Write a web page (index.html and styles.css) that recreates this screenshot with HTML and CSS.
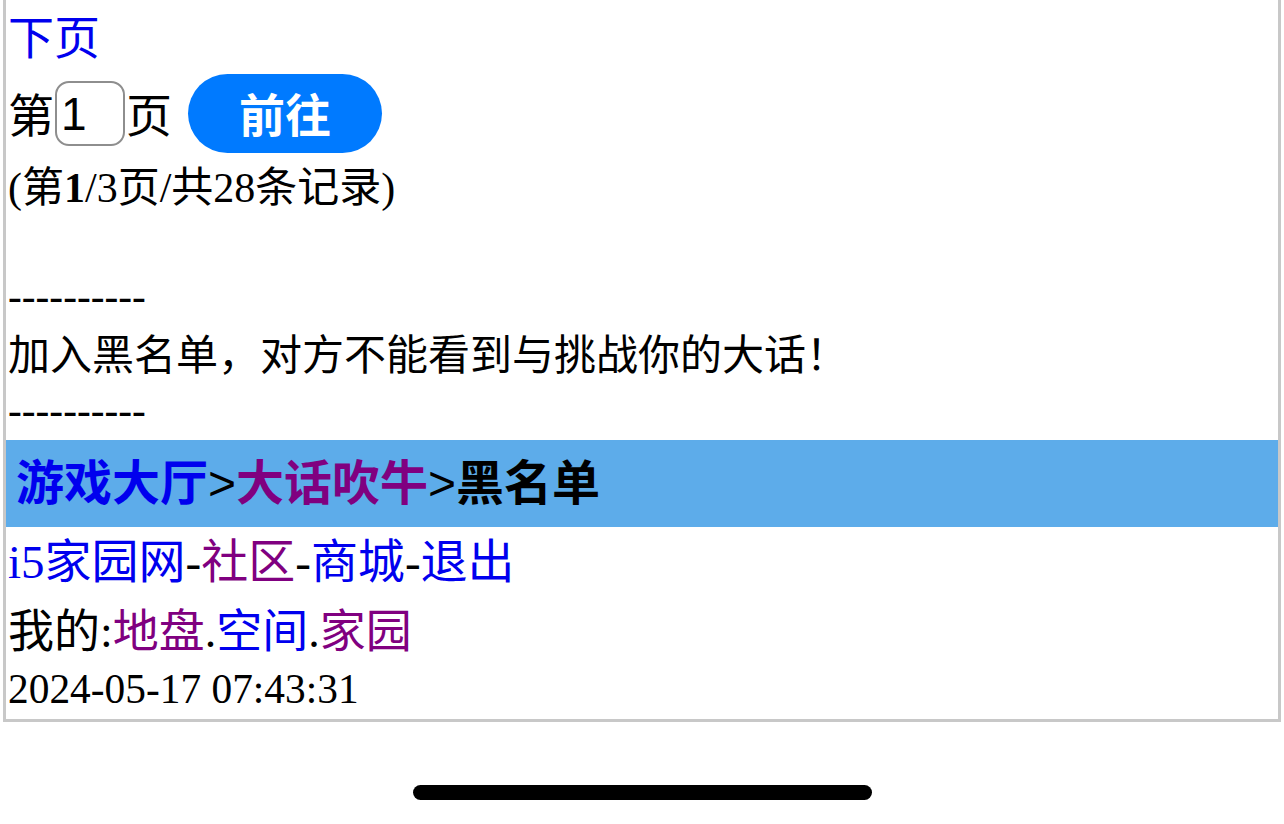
FILE: index.html
```html
<!DOCTYPE html>
<html lang="zh-CN">
<head>
<meta charset="utf-8">
<title>黑名单</title>
<link rel="stylesheet" href="styles.css">
</head>
<body>
<div class="page">
  <div class="next"><a href="#" class="lnk">下页</a></div>
  <form class="goto">
    <span class="goto-txt">第</span>
    <input class="goto-input" type="text" value="1">
    <span class="goto-txt">页</span>
    <button class="goto-btn" type="button">前往</button>
  </form>
  <div class="info">(第<b>1</b>/3页/共28条记录)</div>
  <div class="blank"></div>
  <div class="dash">----------</div>
  <div class="tip">加入黑名单，对方不能看到与挑战你的大话！</div>
  <div class="dash dash2">----------</div>
  <div class="crumb"><a href="#" class="lnk">游戏大厅</a><span class="gt">&gt;</span><a href="#" class="vis">大话吹牛</a><span class="gt">&gt;</span>黑名单</div>
  <div class="links"><a href="#" class="lnk">i5家园网</a>-<a href="#" class="vis">社区</a>-<a href="#" class="lnk">商城</a>-<a href="#" class="lnk">退出</a></div>
  <div class="mine">我的:<a href="#" class="vis">地盘</a>.<a href="#" class="lnk">空间</a>.<a href="#" class="vis">家园</a></div>
  <div class="time">2024-05-17 07:43:31</div>
</div>
<div class="home-indicator"></div>
</body>
</html>
```

FILE: styles.css
```css
html, body {
  margin: 0;
  padding: 0;
  background: #ffffff;
}

body {
  font-family: "Liberation Serif", "Noto Sans CJK SC", serif;
  font-size: 41.4px;
  color: #000000;
}

.page {
  margin: 0 3px;
  border: 3px solid #c8c8c8;
  border-top: none;
  padding: 0 2px 6px;
}

a {
  text-decoration: none;
}

.lnk {
  color: #0000ee;
}

.vis {
  color: #800080;
}

.next {
  font-size: 46px;
  line-height: 71px;
  padding-top: 3px;
}

.goto {
  display: flex;
  align-items: center;
  height: 79px;
  margin: 0;
}

.goto-txt {
  font-size: 46px;
  line-height: 46px;
  padding-top: 6px;
}

.goto-input {
  box-sizing: border-box;
  width: 70px;
  height: 65px;
  margin: 0 1px 0 1px;
  padding: 0 4px;
  border: 2.5px solid #8e8e8e;
  border-radius: 14px;
  font-family: "Liberation Sans", "Noto Sans CJK SC", sans-serif;
  font-size: 46px;
  color: #000;
  background: #fff;
  outline: none;
}

.goto-btn {
  box-sizing: border-box;
  width: 194px;
  height: 79px;
  margin-left: 16px;
  padding: 6px 0 0;
  border: none;
  border-radius: 40px;
  background: #007aff;
  color: #ffffff;
  font-family: "Liberation Sans", "Noto Sans CJK SC", sans-serif;
  font-size: 46px;
  font-weight: bold;
  line-height: 73px;
}

.info {
  font-size: 42px;
  line-height: 70px;
}

.blank {
  height: 48px;
}

.dash {
  line-height: 50px;
}

.tip {
  font-size: 42px;
  line-height: 70px;
}

.dash2 {
  line-height: 38px;
  margin-bottom: 11px;
}

.crumb {
  margin: 0 -2px;
  padding-left: 10px;
  height: 87px;
  line-height: 87px;
  background: #5dacea;
  font-family: "Liberation Sans", "Noto Sans CJK SC", sans-serif;
  font-size: 48px;
  font-weight: bold;
}

.crumb .gt {
  font-weight: normal;
}

.links {
  font-size: 47px;
  line-height: 71px;
}

.mine {
  font-size: 46px;
  line-height: 67px;
}

.time {
  line-height: 48px;
}

.home-indicator {
  position: fixed;
  left: 413px;
  top: 785px;
  width: 459px;
  height: 15px;
  border-radius: 8px;
  background: #000000;
}
```
